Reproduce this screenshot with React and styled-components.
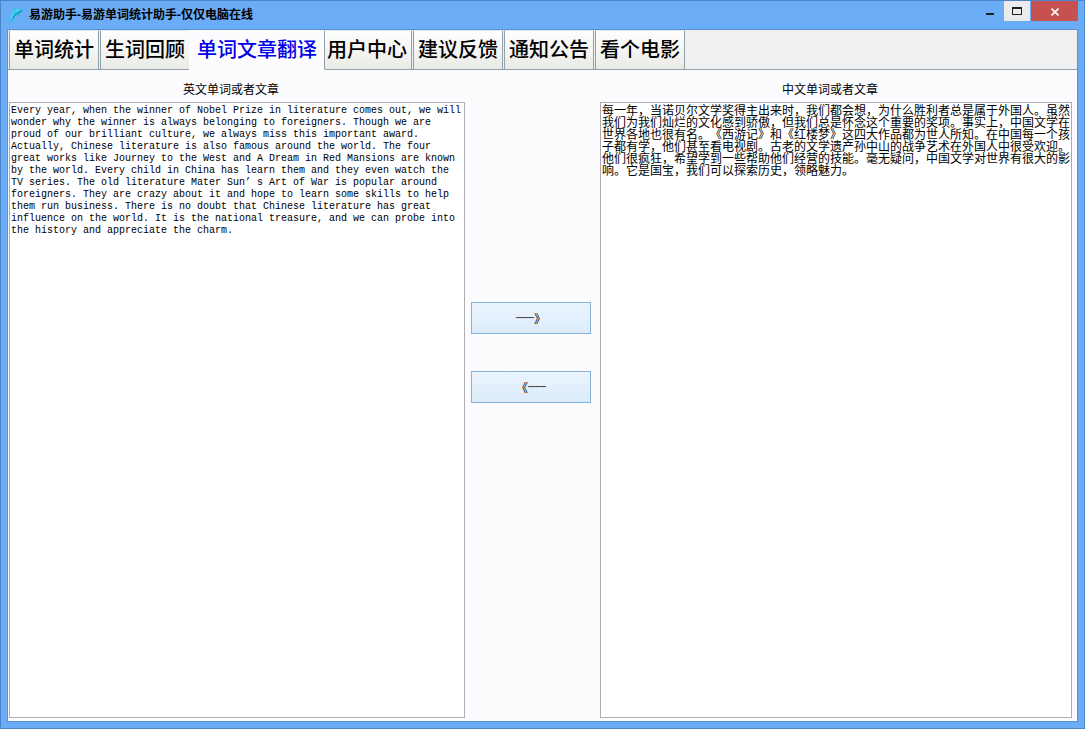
import { useState } from 'react'
import styled, { createGlobalStyle } from 'styled-components'

const TABS = ['单词统计', '生词回顾', '单词文章翻译', '用户中心', '建议反馈', '通知公告', '看个电影']

const ENGLISH = 'Every year, when the winner of Nobel Prize in literature comes out, we will wonder why the winner is always belonging to foreigners. Though we are proud of our brilliant culture, we always miss this important award. Actually, Chinese literature is also famous around the world. The four great works like Journey to the West and A Dream in Red Mansions are known by the world. Every child in China has learn them and they even watch the TV series. The old literature Mater Sun’ s Art of War is popular around foreigners. They are crazy about it and hope to learn some skills to help them run business. There is no doubt that Chinese literature has great influence on the world. It is the national treasure, and we can probe into the history and appreciate the charm.'

const CHINESE = '每一年，当诺贝尔文学奖得主出来时，我们都会想，为什么胜利者总是属于外国人。虽然我们为我们灿烂的文化感到骄傲，但我们总是怀念这个重要的奖项。事实上，中国文学在世界各地也很有名。《西游记》和《红楼梦》这四大作品都为世人所知。在中国每一个孩子都有学，他们甚至看电视剧。古老的文学遗产孙中山的战争艺术在外国人中很受欢迎。他们很疯狂，希望学到一些帮助他们经营的技能。毫无疑问，中国文学对世界有很大的影响。它是国宝，我们可以探索历史，领略魅力。'

export default function App() {

    const [tab, setTab] = useState(2)
    const [english, setEnglish] = useState(ENGLISH)
    const [chinese, setChinese] = useState(CHINESE)

    return (
        <Window>
            <GlobalStyle />
            <TitleBar>
                <Logo />
                <Title>易游助手-易游单词统计助手-仅仅电脑在线</Title>
                <MinButton aria-label="最小化">
                    <svg width="8" height="20"><path d="M0 14h8" stroke="#1c2026" strokeWidth="2" /></svg>
                </MinButton>
                <MaxButton aria-label="最大化">
                    <svg width="10" height="20"><path d="M0.5 7v8M9.5 7v8M0 14.5h10" stroke="#1c2026" strokeWidth="1" /><path d="M0 8h10" stroke="#1c2026" strokeWidth="2" /></svg>
                </MaxButton>
                <CloseButton aria-label="关闭">
                    <svg width="8" height="20"><path d="M0.5 8.5l7 7M7.5 8.5l-7 7" stroke="#fff" strokeWidth="1.6" /></svg>
                </CloseButton>
            </TitleBar>
            <Client>
                <TabStrip role="tablist">
                    {TABS.map((name, i) => (
                        <Tab key={name} role="tab" aria-selected={i === tab} $active={i === tab} onClick={() => setTab(i)}>
                            {name}
                        </Tab>
                    ))}
                </TabStrip>
                <Panel>
                    <Column>
                        <Label htmlFor="english">英文单词或者文章</Label>
                        <EnglishBox id="english" spellCheck={false} value={english} onChange={(e) => setEnglish(e.target.value)} />
                    </Column>
                    <Actions>
                        <Action aria-label="英译中"><Dash>───</Dash>》</Action>
                        <Action aria-label="中译英">《<Dash>───</Dash></Action>
                    </Actions>
                    <Column>
                        <Label htmlFor="chinese">中文单词或者文章</Label>
                        <TextBox id="chinese" spellCheck={false} value={chinese} onChange={(e) => setChinese(e.target.value)} />
                    </Column>
                </Panel>
            </Client>
        </Window>
    )
}

function Logo() {
    return (
        <svg width="16" height="16" viewBox="0 0 16 16" aria-hidden="true">
            <path d="M0 14L2.6 12.4C3 8.6 4 5.4 6.4 3.6L5.8 1.6L9 2.2C11.2 1.2 13.6 1.6 14.6 2.8L15.6 4.2L12.6 5L11.2 6.2L12.4 9.4L9.2 7.4C7.2 8.6 5.6 10.6 4.6 12.6L5.2 15.6L3 14Z" fill="#1fc0e6" />
            <path d="M3.4 12C3.8 8.4 5 5.2 7.6 3.8L11.4 2.8" fill="none" stroke="#7cecf8" strokeWidth="1" />
            <path d="M4.6 12C6 9 8 7 10.6 5.8L14 4" fill="none" stroke="#1a86b8" strokeWidth="1" />
        </svg>
    )
}



const GlobalStyle = createGlobalStyle`
    * {
        box-sizing: border-box;
    }

    body {
        margin: 0;
        font-family: "Liberation Sans", "Noto Sans CJK SC", sans-serif;
        font-size: 12px;
        color: #000;
    }

    button, textarea {
        margin: 0;
        padding: 0;
        border: 0;
        border-radius: 0;
        font: inherit;
        color: inherit;
    }
`

const Window = styled.div`
    display: flex;
    flex-direction: column;
    min-height: 100vh;
    padding: 0 6px 6px;
    border: 1px solid #4c84c8;
    background: #6bacf6;
`

const TitleBar = styled.header`
    display: flex;
    height: 28px;

    > svg {
        margin: 6px 5px 0 1px;
    }
`

const Title = styled.h1`
    flex: 1;
    margin: 0;
    font-size: 12px;
    line-height: 28px;
    font-weight: 700;
`

const WindowButton = styled.button`
    display: flex;
    justify-content: center;
    height: 20px;
    width: 26px;
    background: transparent;

    svg {
        margin-top: -1px;
    }
`

const MinButton = styled(WindowButton)``

const MaxButton = styled(WindowButton)`
    margin: 0 1px;
    background: #ebebeb;
`

const CloseButton = styled(WindowButton)`
    width: 47px;
    background: #c75050;
`

const Client = styled.main`
    flex: 1;
    display: flex;
    flex-direction: column;
    border: 1px solid #5b8fcf;
    background: #fcfcff;
`

const TabStrip = styled.div`
    display: flex;
    gap: 1px;
    height: 40px;
    padding-left: 1px;
    background: #f0f0f0;
    border-bottom: 1px solid #91a1ab;
`

const Tab = styled.button`
    position: relative;
    z-index: ${(props) => (props.$active ? 1 : 0)};
    flex: none;
    width: ${(props) => (props.$active ? '136px' : '90px')};
    height: 40px;
    margin: ${(props) => (props.$active ? '0 -4px 0 -2px' : '0')};
    border: 1px solid #91a1ab;
    border-top-color: #e4e8ec;
    ${(props) => props.$active && 'border-color: #fcfcff #91a1ab #fcfcff #fcfcff;'}
    background: ${(props) => (props.$active ? '#fcfcff' : 'linear-gradient(#fefefe, #f5f5f3 50%, #e9eae5)')};
    color: ${(props) => (props.$active ? '#0000e6' : '#000')};
    font-size: 20px;
    line-height: 36px;
    font-weight: 500;
    white-space: nowrap;
`

const Panel = styled.section`
    flex: 1;
    display: grid;
    grid-template-columns: 456fr 135px 472fr;
    padding: 0 5px 3px 1px;
`

const Column = styled.div`
    display: flex;
    flex-direction: column;
    min-width: 0;
`

const Label = styled.label`
    height: 32px;
    padding: 11px 12px 0 0;
    line-height: 18px;
    text-align: center;
`

const TextBox = styled.textarea`
    flex: 1;
    width: 100%;
    padding: 1px;
    border: 1px solid #abadb3;
    background: #fff;
    font-size: 12px;
    line-height: 12px;
    font-family: "Noto Sans CJK SC", sans-serif;
    text-spacing-trim: space-all;
    resize: none;
    outline: none;
`

const EnglishBox = styled(TextBox)`
    padding: 2px 1px;
    font-family: "Liberation Mono", monospace;
    font-size: 10px;
`

const Actions = styled.div`
    display: flex;
    flex-direction: column;
    gap: 37px;
    padding: 232px 9px 0 6px;
`

const Action = styled.button`
    display: flex;
    align-items: center;
    justify-content: center;
    height: 32px;
    border: 1px solid #84b2d8;
    background: linear-gradient(#ebf4fd, #dcebfb);
    font-family: "Noto Sans CJK SC", sans-serif;
`

const Dash = styled.span`
    font-family: "Liberation Mono", monospace;
    font-size: 10px;
`
